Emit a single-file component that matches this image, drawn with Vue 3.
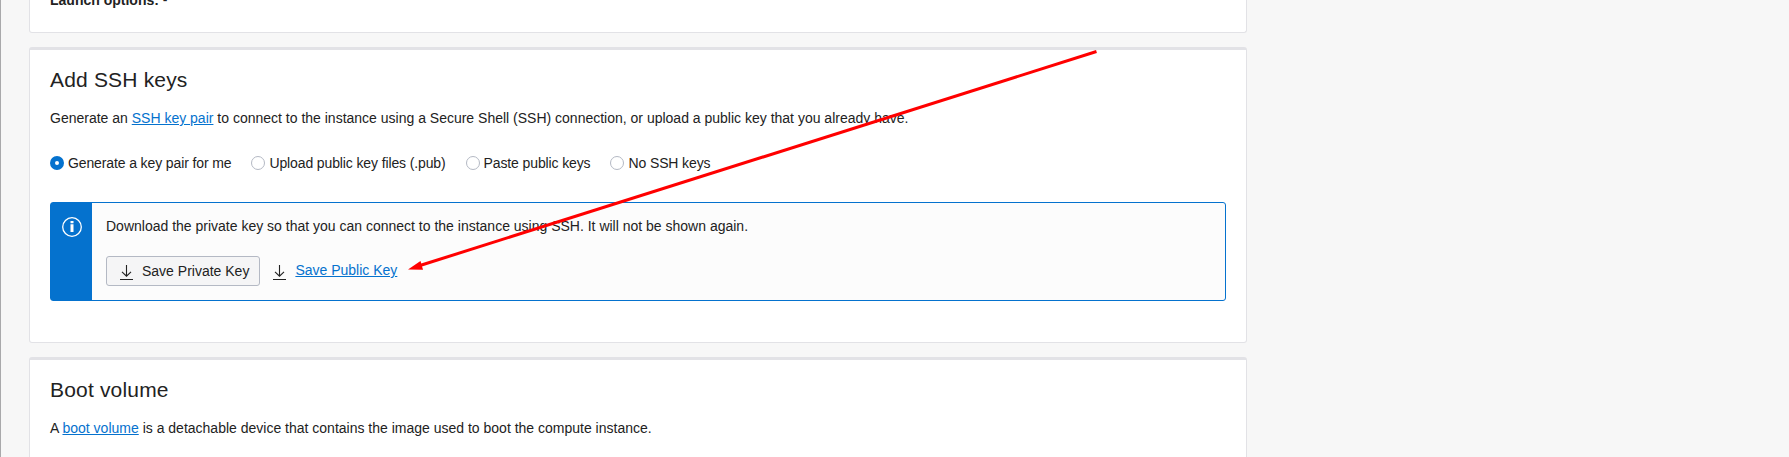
<script setup>
import { ref } from 'vue'

const selected = ref('generate')
const options = [
  { id: 'generate', label: 'Generate a key pair for me' },
  { id: 'upload', label: 'Upload public key files (.pub)' },
  { id: 'paste', label: 'Paste public keys' },
  { id: 'none', label: 'No SSH keys' },
]
</script>

<template>
  <main class="page">
    <section class="card card-image">
      <p class="launch"><b>Launch options:</b> -</p>
    </section>

    <section class="card card-ssh">
      <h2>Add SSH keys</h2>
      <p class="text">
        Generate an <a>SSH key pair</a> to connect to the instance using a Secure Shell (SSH) connection, or upload a public key that you already have.
      </p>
      <div class="radios">
        <label v-for="o in options" :key="o.id" :class="['option', o.id]" @click="selected = o.id">
          <span class="radio" :class="{ on: selected === o.id }"></span>
          <span>{{ o.label }}</span>
        </label>
      </div>
      <div class="notice">
        <div class="strip">
          <svg width="20" height="20" viewBox="0 0 20 20">
            <circle cx="10" cy="10" r="9.3" fill="none" stroke="#fff" stroke-width="1.3" />
            <path d="M8.5 4h3v2.2h-3zM8.5 7.2h3V15h-3z" fill="#fff" />
          </svg>
        </div>
        <div class="content">
          <p class="text">Download the private key so that you can connect to the instance using SSH. It will not be shown again.</p>
          <div class="actions">
            <button class="save">
              <svg class="dl" width="13" height="15" viewBox="0 0 13 15">
                <path d="M6.5 0v11.2M2 6.8l4.5 4.4L11 6.8M0 14.5h13" />
              </svg>
              <span>Save Private Key</span>
            </button>
            <svg class="dl public" width="13" height="15" viewBox="0 0 13 15">
              <path d="M6.5 0v11.2M2 6.8l4.5 4.4L11 6.8M0 14.5h13" />
            </svg>
            <a class="save-link">Save Public Key</a>
          </div>
        </div>
      </div>
    </section>

    <section class="card card-boot">
      <h2>Boot volume</h2>
      <p class="text">
        A <a>boot volume</a> is a detachable device that contains the image used to boot the compute instance.
      </p>
    </section>

    <svg class="pointer" width="1789" height="457" viewBox="0 0 1789 457">
      <path d="M1096.5 51.5L420 265.5" stroke="#f00" stroke-width="3" fill="none" />
      <path d="M408 269.5L420.5 261L423 269.7Z" fill="#f00" />
    </svg>
  </main>
</template>

<style>
body {
  margin: 0;
  overflow: hidden;
}
</style>

<style scoped>
.page {
  position: relative;
  box-sizing: border-box;
  height: 457px;
  overflow: hidden;
  display: flex;
  flex-direction: column;
  gap: 14px;
  padding-left: 28px;
  border-left: 1px solid #a9a9ab;
  background: #f7f7f7;
  color: #222;
  font: 14px/20px "Liberation Sans", Arial, sans-serif;
}
.card {
  box-sizing: border-box;
  flex: none;
  width: 1218px;
  padding: 0 20px;
  border: 1px solid #e2e2e6;
  border-top-width: 3px;
  border-radius: 3px;
  background: #fff;
}
.card-image {
  height: 33px;
  border-top: 0;
  border-radius: 0 0 3px 3px;
}
.card-ssh {
  height: 296px;
}
.card-boot {
  height: 140px;
}
.launch {
  margin: -10px 0 0;
}
h2 {
  margin: 17px 0 0;
  font-size: 21px;
  line-height: 26px;
  font-weight: 400;
  letter-spacing: 0.18px;
}
.text {
  margin: 0;
  white-space: nowrap;
}
h2 + .text {
  margin-top: 15px;
}
a {
  color: #0572ce;
  text-decoration: underline;
}
.radios {
  display: flex;
  margin-top: 25px;
}
.option {
  display: flex;
  align-items: center;
  gap: 4px;
  letter-spacing: -0.12px;
  white-space: nowrap;
}
.option + .option {
  margin-left: 20px;
}
.radio {
  box-sizing: border-box;
  width: 14px;
  height: 14px;
  border: 1px solid #b4b9c4;
  border-radius: 50%;
  background: #fff;
}
.radio.on {
  border: 5px solid #0572ce;
}
.notice {
  box-sizing: border-box;
  display: flex;
  height: 99px;
  margin-top: 29px;
  border: 1px solid #0572ce;
  border-radius: 3px;
  background: #fcfcfc;
}
.strip {
  width: 41px;
  background: #0572ce;
  display: flex;
  justify-content: center;
  padding-top: 14px;
  box-sizing: border-box;
}
.content {
  padding: 13px 0 0 14px;
}
.actions {
  display: flex;
  margin-top: 20px;
}
.save {
  box-sizing: border-box;
  display: flex;
  width: 154px;
  height: 30px;
  padding: 0 0 0 13px;
  border: 1px solid #b4b9c4;
  border-radius: 3px;
  background: #f5f5f6;
  color: #222;
  font: inherit;
  line-height: 28px;
  white-space: nowrap;
}
.dl {
  flex: none;
  fill: none;
  stroke: #222;
  stroke-width: 1.1;
}
.save .dl {
  margin: 8px 9px 0 0;
}
.public {
  margin: 9px 9.4px 0 13px;
}
.save-link {
  line-height: 28px;
}
.pointer {
  position: absolute;
  left: -1px;
  top: 0;
  pointer-events: none;
}
</style>
